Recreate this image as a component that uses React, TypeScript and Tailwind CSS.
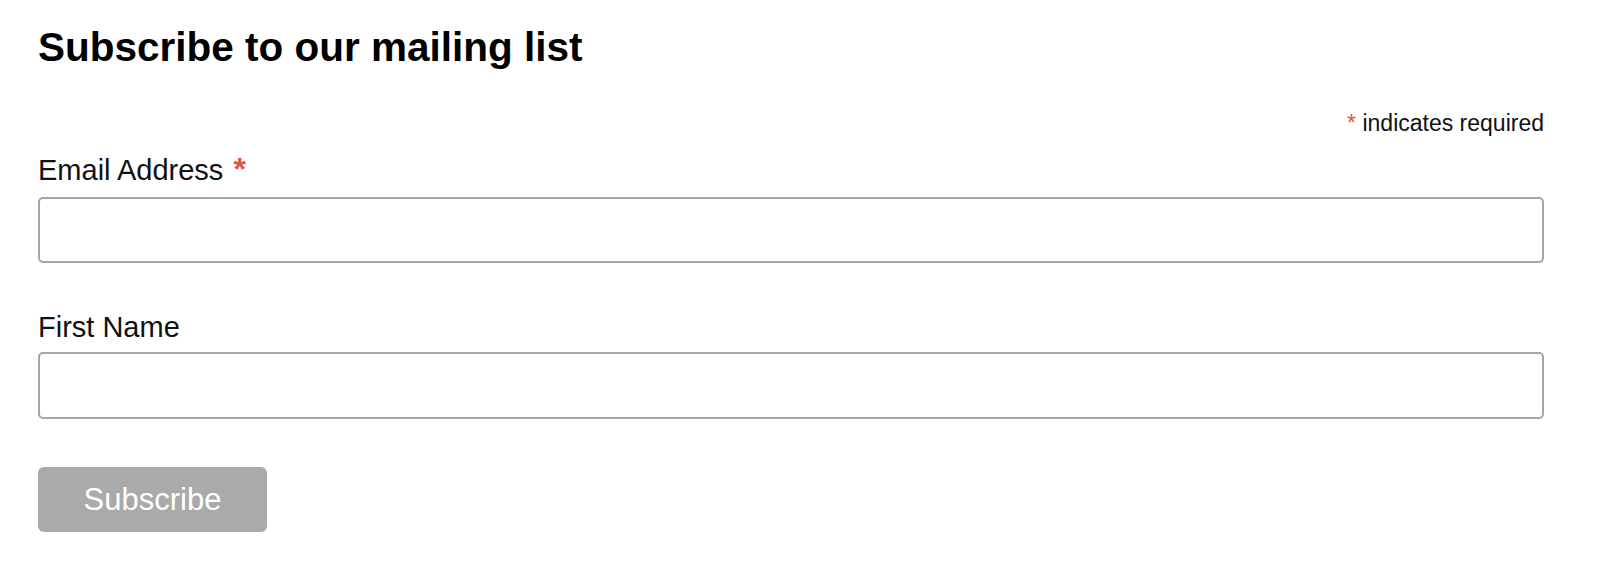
export default function App() {
  return (
    <main className="bg-white min-h-screen pt-6 pl-[38px] pr-[56px] font-['Liberation_Sans',Arial,sans-serif] text-[#111]">
      <h2 className="text-[40.5px] leading-[47px] font-bold text-black">Subscribe to our mailing list</h2>
      <div className="mt-[39px] text-right text-[23px] leading-[26px]">
        <span className="text-[#e0563c]">*</span> indicates required
      </div>
      <form onSubmit={(e) => e.preventDefault()}>
        <div className="mt-[18px]">
          <label htmlFor="email" className="block text-[29px] leading-[32px]">
            Email Address <span className="ml-0.5 text-[#e0563c] font-bold text-[32px] leading-[0]">*</span>
          </label>
          <input
            id="email"
            type="email"
            className="mt-[11px] block w-full h-[66px] border-2 border-[#a5a5a5] rounded-[5px] bg-white outline-none"
          />
        </div>
        <div className="mt-[48px]">
          <label htmlFor="fname" className="block text-[29px] leading-[32px]">
            First Name
          </label>
          <input
            id="fname"
            type="text"
            className="mt-[9px] block w-full h-[67px] border-2 border-[#a5a5a5] rounded-[5px] bg-white outline-none"
          />
        </div>
        <button
          type="submit"
          className="mt-[48px] w-[229px] h-[65px] rounded-[6px] bg-[#aaaaaa] text-white text-[31px] leading-none"
        >
          Subscribe
        </button>
      </form>
    </main>
  );
}
